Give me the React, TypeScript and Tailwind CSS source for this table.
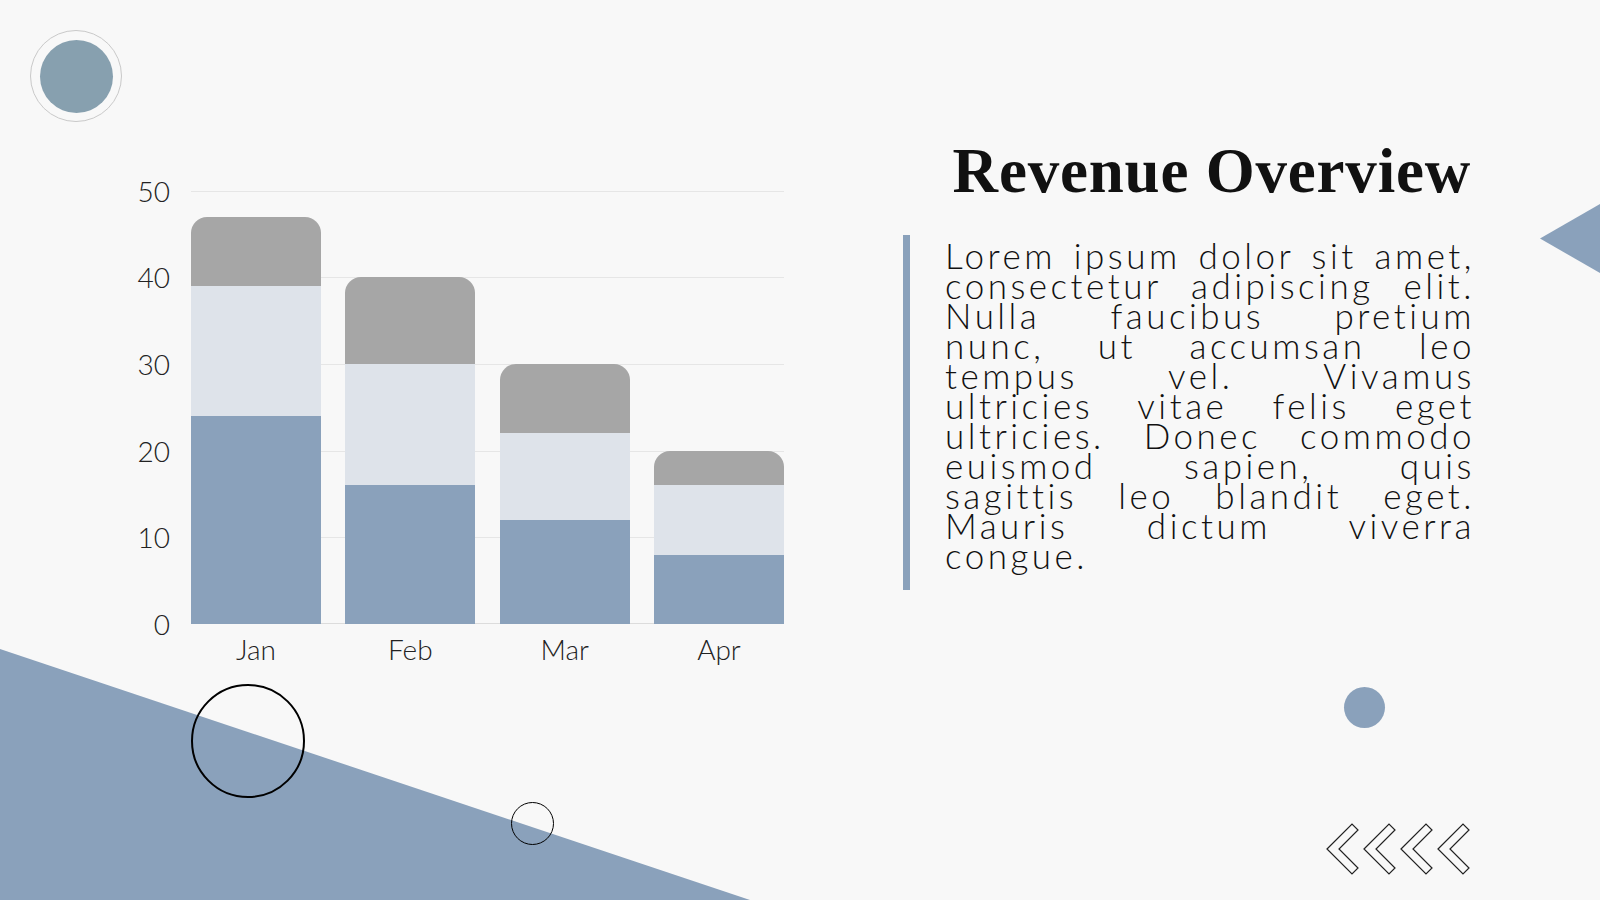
import React from "react";

const UNIT = 433.333 / 50;

const bars = [
  { m: "Jan", a: 24, b: 15, c: 8 },
  { m: "Feb", a: 16, b: 14, c: 10 },
  { m: "Mar", a: 12, b: 10, c: 8 },
  { m: "Apr", a: 8, b: 8, c: 4 },
];

const lines = [
  "Lorem ipsum dolor sit amet,",
  "consectetur adipiscing elit.",
  "Nulla faucibus pretium",
  "nunc, ut accumsan leo",
  "tempus vel. Vivamus",
  "ultricies vitae felis eget",
  "ultricies. Donec commodo",
  "euismod sapien, quis",
  "sagittis leo blandit eget.",
  "Mauris dictum viverra",
];

export default function App() {
  return (
    <div className="relative w-[1600px] h-[900px] overflow-hidden bg-[#f8f8f8] font-['Lato','Liberation_Sans',sans-serif] text-[#111]">
      {/* decorations */}
      <svg className="absolute left-0 top-[649px]" width="750" height="251" viewBox="0 0 750 251">
        <polygon points="0,0 750,251 0,251" fill="#8aa1bb" />
      </svg>
      <div className="absolute left-[30px] top-[30px] w-[92px] h-[92px] rounded-full border border-[#c9c9c9] flex items-center justify-center">
        <div className="w-[73px] h-[73px] rounded-full bg-[#87a0af]" />
      </div>
      <svg className="absolute left-[1540px] top-[204px]" width="60" height="69" viewBox="0 0 60 69">
        <polygon points="0,34.5 60,0 60,69" fill="#8aa1bb" />
      </svg>
      <div className="absolute left-[1344px] top-[687px] w-[41px] h-[41px] rounded-full bg-[#8aa1bb]" />
      <svg className="absolute left-[1326px] top-[823px]" width="150" height="54" viewBox="0 0 150 54">
        {[0, 37, 74, 111].map((dx) => (
          <polygon
            key={dx}
            points={`${dx + 1},26 ${dx + 26},1 ${dx + 32},7 ${dx + 13},26 ${dx + 32},45 ${dx + 26},51`}
            fill="none"
            stroke="#222"
            strokeWidth="1.2"
          />
        ))}
      </svg>
      <div className="absolute left-[191px] top-[684px] w-[114px] h-[114px] rounded-full border-2 border-black" />
      <div className="absolute left-[511px] top-[802px] w-[43px] h-[43px] rounded-full border border-black" />

      {/* content */}
      <div className="relative flex items-start pl-[130px] pt-[140px]">
        {/* chart */}
        <div className="mt-[35.67px] flex flex-col font-light">
          <div className="flex gap-[21px]">
            <div className="flex w-[40px] flex-col items-end text-[28px] leading-[30px] text-[#222]">
              {[50, 40, 30, 20, 10].map((v) => (
                <div key={v} className="h-[86.667px]">{v}</div>
              ))}
              <div className="h-[30px]">0</div>
            </div>
            <div className="relative mt-[15px] w-[593px] h-[433.333px]">
              <div className="flex h-full flex-col">
                {[0, 1, 2, 3, 4].map((i) => (
                  <div key={i} className={`h-[86.667px] border-t border-[#e6e6e6] ${i === 4 ? "border-b border-b-[#dcdcdc]" : ""}`} />
                ))}
              </div>
              <div className="absolute inset-0 flex items-end justify-between">
                {bars.map((b) => (
                  <div key={b.m} className="flex w-[130px] flex-col overflow-hidden rounded-t-[16px]">
                    <div className="bg-[#a6a6a6]" style={{ height: b.c * UNIT }} />
                    <div className="bg-[#dee3ea]" style={{ height: b.b * UNIT }} />
                    <div className="bg-[#8aa1bb]" style={{ height: b.a * UNIT }} />
                  </div>
                ))}
              </div>
            </div>
          </div>
          <div className="ml-[61px] mt-[-8px] flex w-[593px] justify-between text-[28px] leading-[36px] text-[#222]">
            {bars.map((b) => (
              <div key={b.m} className="w-[130px] text-center">{b.m}</div>
            ))}
          </div>
        </div>

        {/* text column */}
        <div className="ml-[119px] flex w-[572px] shrink-0 flex-col">
          <h1 className="mr-[4px] text-right font-['Liberation_Serif',serif] text-[63px] font-bold leading-[63px] tracking-[0.8px] text-[#111]">
            Revenue Overview
          </h1>
          <div className="mt-[32px] flex">
            <div className="h-[355px] w-[7px] shrink-0 bg-[#8aa1bb]" />
            <div className="ml-[35px] w-[530px] shrink-0 pt-[4.5px] text-[35px] font-light leading-[30px] tracking-[3.5px] text-[#111]">
              {lines.map((l) => (
                <div key={l} className="text-justify [text-align-last:justify]">{l}</div>
              ))}
              <div>congue.</div>
            </div>
          </div>
        </div>
      </div>
    </div>
  );
}
